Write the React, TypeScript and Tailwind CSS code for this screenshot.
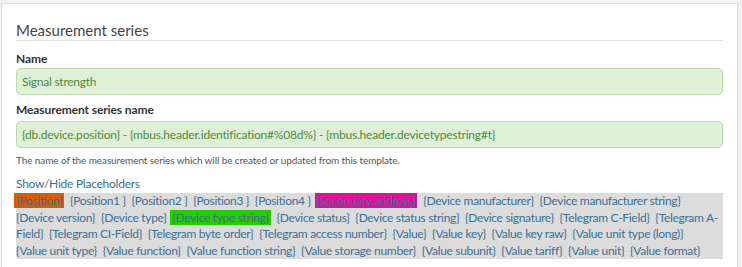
import React from "react";

const tags: { t: string; c?: string }[] = [
  { t: "{Position}", c: "bg-[#d95b00]" },
  { t: "{Position1 }" },
  { t: "{Position2 }" },
  { t: "{Position3 }" },
  { t: "{Position4 }" },
  { t: "{Secondary address}", c: "bg-[#e0109c]" },
  { t: "{Device manufacturer}" },
  { t: "{Device manufacturer string}" },
  { t: "{Device version}" },
  { t: "{Device type}" },
  { t: "{Device type string}", c: "bg-[#25cc00]" },
  { t: "{Device status}" },
  { t: "{Device status string}" },
  { t: "{Device signature}" },
  { t: "{Telegram C-Field}" },
  { t: "{Telegram A-Field}" },
  { t: "{Telegram CI-Field}" },
  { t: "{Telegram byte order}" },
  { t: "{Telegram access number}" },
  { t: "{Value}" },
  { t: "{Value key}" },
  { t: "{Value key raw}" },
  { t: "{Value unit type (long)}" },
  { t: "{Value unit type}" },
  { t: "{Value function}" },
  { t: "{Value function string}" },
  { t: "{Value storage number}" },
  { t: "{Value subunit}" },
  { t: "{Value tariff}" },
  { t: "{Value unit}" },
  { t: "{Value format}" },
];

export default function App() {
  return (
    <div
      className="w-[742px] h-[267px] overflow-hidden bg-[#f2f2f2] pt-[3px] pl-[1px]"
      style={{ fontFamily: "Lato, 'Open Sans', sans-serif" }}
    >
      <div className="w-[737px] h-[280px] bg-white border border-[#dedede] pl-[14px] pr-[14px] pt-[17px]">
        <h2 className="text-[15px] leading-[18px] text-[#444] pb-[1px] border-b border-[#e3e3e3]">
          Measurement series
        </h2>
        <div className="mt-[10px] text-[12px] leading-[16px] font-bold text-[#333] tracking-[-0.1px]">Name</div>
        <div className="mt-[1px] h-[27px] rounded-[5px] border border-[#b9dca6] bg-[#dff0d8] px-[5px] flex items-center text-[12px] tracking-[-0.25px] text-[#4f8a3f]">
          Signal strength
        </div>
        <div className="mt-[7px] text-[12px] leading-[16px] font-bold text-[#333] tracking-[-0.1px]">
          Measurement series name
        </div>
        <div className="mt-[3px] h-[27px] rounded-[5px] border border-[#b9dca6] bg-[#dff0d8] px-[5px] flex items-center text-[12px] tracking-[-0.2px] text-[#4f8a3f]">
          {"{db.device.position} - {mbus.header.identification#%08d%} - {mbus.header.devicetypestring#t}"}
        </div>
        <div className="mt-[5px] text-[10px] leading-[14px] tracking-[-0.1px] text-[#555]">
          The name of the measurement series which will be created or updated from this template.
        </div>
        <div className="mt-[9px] text-[12px] leading-[16px] tracking-[-0.25px] text-[#3d6f93]">Show/Hide Placeholders</div>
        <div className="mt-[1px] bg-[#dcdcdc] text-[12px] leading-[16.5px] tracking-[-0.32px] text-[#3d6f93]">
          {tags.map((g, i) => (
            <React.Fragment key={i}>
              <span className={g.c ? g.c + " mr-[3px] -ml-[2px] px-[2px]" : "mr-[3px]"}>
                {g.t.replace(/ /g, "\u00a0")}
              </span>{" "}
            </React.Fragment>
          ))}
        </div>
      </div>
    </div>
  );
}
